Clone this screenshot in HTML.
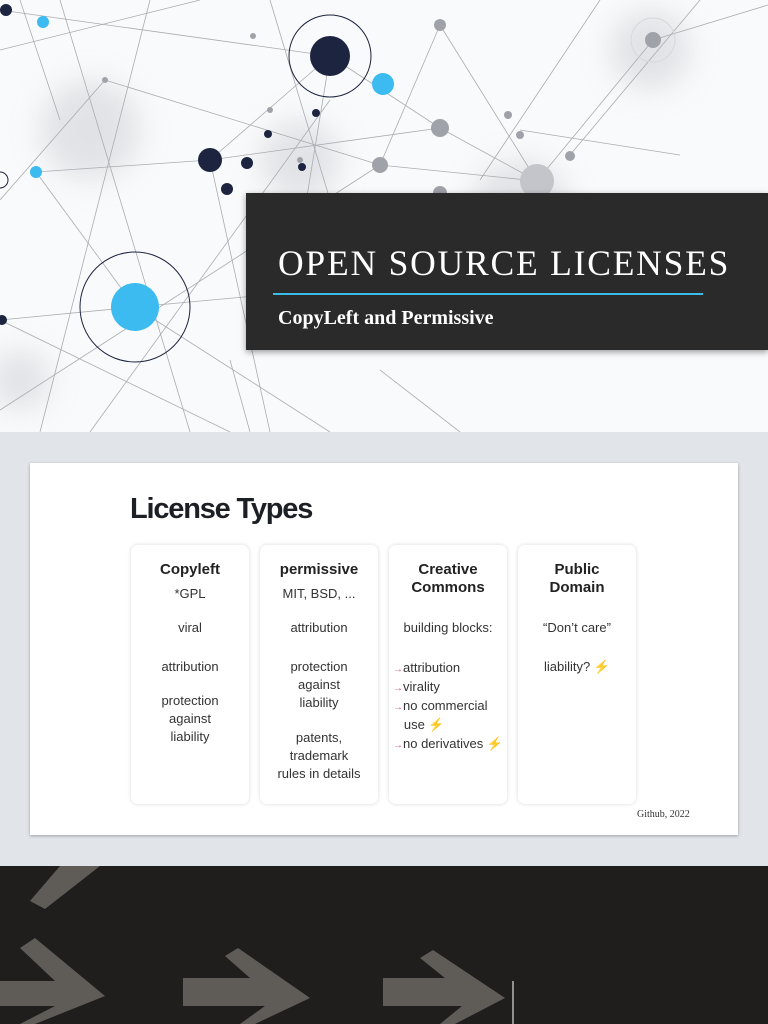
<!DOCTYPE html>
<html><head><meta charset="utf-8">
<style>
*{margin:0;padding:0;box-sizing:border-box}
body{width:768px;height:1024px;overflow:hidden;background:#e1e4e8;font-family:"Liberation Sans",sans-serif;position:relative}
#top{position:absolute;left:0;top:0;width:768px;height:432px;background:#f9fafb;overflow:hidden}
#tbox{position:absolute;left:246px;top:193px;width:522px;height:157px;background:#2a2a2a;box-shadow:0 2px 6px rgba(0,0,0,.4)}
#tbox h1{position:absolute;left:32px;top:49px;font-family:"Liberation Serif",serif;font-weight:normal;color:#fff;font-size:35.5px;letter-spacing:1.8px;white-space:nowrap}
#tbox .ln{position:absolute;left:27px;top:100px;width:430px;height:2px;background:#3bbbe8}
#tbox h2{position:absolute;left:32px;top:114px;font-family:"Liberation Serif",serif;font-weight:bold;color:#fff;font-size:20px}
#card{position:absolute;left:30px;top:463px;width:708px;height:372px;background:#fff;box-shadow:0 1px 3px rgba(0,0,0,.3)}
#card .t{position:absolute;left:100px;top:30px;font-size:29px;font-weight:bold;color:#1c1f24;letter-spacing:-1.2px}
.c{position:absolute;top:82px;width:118px;height:259px;background:#fff;border-radius:7px;box-shadow:0 0 4px rgba(0,0,0,.15);text-align:center;font-size:13px;color:#333;line-height:18px}
.c b{display:block;font-size:15px;color:#222;line-height:18px;margin-top:16px}
.c p{position:absolute;left:0;width:100%}
.l{text-align:left!important;left:4px!important;line-height:19px!important}
.l span{line-height:0}
.a{color:#e0509a;font-size:10px}
.z{color:#f4c430;line-height:0}
#cite{position:absolute;left:607px;top:346px;font-family:"Liberation Serif",serif;font-size:10px;color:#333}
#bot{position:absolute;left:0;top:866px;width:768px;height:158px;background:#1f1e1d;overflow:hidden}
</style></head><body>
<div id="top">
<svg width="768" height="432" style="position:absolute;left:0;top:0">
<defs><filter id="bl"><feGaussianBlur stdDeviation="14"/></filter></defs>
<g filter="url(#bl)" fill="#c9ccd2" opacity=".5">
<circle cx="90" cy="130" r="50"/><circle cx="300" cy="160" r="40"/><circle cx="650" cy="50" r="40"/><circle cx="20" cy="380" r="30"/><circle cx="520" cy="210" r="50"/>
</g>
<g stroke="#a9acb1" stroke-width=".8" fill="none">
<line x1="0" y1="10" x2="330" y2="56"/><line x1="36" y1="172" x2="210" y2="160"/><line x1="210" y1="160" x2="330" y2="56"/>
<line x1="210" y1="160" x2="440" y2="128"/><line x1="36" y1="172" x2="135" y2="307"/><line x1="0" y1="320" x2="135" y2="307"/>
<line x1="135" y1="307" x2="288" y2="293"/><line x1="105" y1="80" x2="0" y2="200"/><line x1="105" y1="80" x2="380" y2="165"/>
<line x1="330" y1="56" x2="440" y2="128"/><line x1="440" y1="128" x2="537" y2="181"/><line x1="537" y1="181" x2="653" y2="40"/>
<line x1="440" y1="25" x2="537" y2="181"/><line x1="440" y1="25" x2="380" y2="165"/><line x1="653" y1="40" x2="768" y2="5"/>
<line x1="520" y1="130" x2="680" y2="155"/><line x1="380" y1="165" x2="537" y2="181"/><line x1="0" y1="320" x2="230" y2="432"/>
<line x1="135" y1="307" x2="330" y2="432"/><line x1="60" y1="0" x2="190" y2="432"/><line x1="150" y1="0" x2="40" y2="432"/>
<line x1="270" y1="0" x2="330" y2="200"/><line x1="0" y1="50" x2="200" y2="0"/><line x1="600" y1="0" x2="480" y2="180"/>
<line x1="210" y1="160" x2="270" y2="432"/><line x1="0" y1="410" x2="380" y2="165"/><line x1="700" y1="0" x2="570" y2="155"/>
<line x1="90" y1="432" x2="330" y2="100"/><line x1="20" y1="0" x2="60" y2="120"/><line x1="330" y1="56" x2="290" y2="300"/>
<line x1="380" y1="370" x2="460" y2="432"/><line x1="230" y1="360" x2="250" y2="432"/>
</g>
<g fill="#9fa3a9">
<circle cx="440" cy="25" r="6"/><circle cx="440" cy="128" r="9"/><circle cx="380" cy="165" r="8"/><circle cx="537" cy="181" r="17" fill="#c3c5ca"/>
<circle cx="653" cy="40" r="8"/><circle cx="508" cy="115" r="4"/><circle cx="570" cy="156" r="5"/><circle cx="105" cy="80" r="3"/><circle cx="253" cy="36" r="3"/>
<circle cx="520" cy="135" r="4"/><circle cx="440" cy="193" r="7"/><circle cx="300" cy="160" r="3"/><circle cx="270" cy="110" r="3"/>
</g>
<circle cx="653" cy="40" r="22" fill="none" stroke="#d6d8db"/>
<g fill="#1c2440">
<circle cx="330" cy="56" r="20"/><circle cx="210" cy="160" r="12"/><circle cx="247" cy="163" r="6"/><circle cx="227" cy="189" r="6"/>
<circle cx="268" cy="134" r="4"/><circle cx="302" cy="167" r="4"/><circle cx="316" cy="113" r="4"/><circle cx="6" cy="10" r="6"/><circle cx="2" cy="320" r="5"/>
</g>
<circle cx="330" cy="56" r="41" fill="none" stroke="#1c2440" stroke-width="1"/>
<circle cx="135" cy="307" r="55" fill="none" stroke="#1c2440" stroke-width="1"/>
<circle cx="0" cy="180" r="8" fill="none" stroke="#1c2440" stroke-width="1"/>
<g fill="#3bbbf0">
<circle cx="135" cy="307" r="24"/><circle cx="383" cy="84" r="11"/><circle cx="43" cy="22" r="6"/><circle cx="36" cy="172" r="6"/>
</g>
</svg>
<div id="tbox"><h1>OPEN SOURCE LICENSES</h1><div class="ln"></div><h2>CopyLeft and Permissive</h2></div>
</div>
<div id="card">
<div class="t">License Types</div>
<div class="c" style="left:101px"><b>Copyleft</b><p style="top:40px">*GPL</p><p style="top:74px">viral</p><p style="top:113px">attribution</p><p style="top:147px">protection<br>against<br>liability</p></div>
<div class="c" style="left:230px"><b>permissive</b><p style="top:40px">MIT, BSD, ...</p><p style="top:74px">attribution</p><p style="top:113px">protection<br>against<br>liability</p><p style="top:184px">patents,<br>trademark<br>rules in details</p></div>
<div class="c" style="left:359px"><b>Creative<br>Commons</b><p style="top:74px">building blocks:</p><p class="l" style="top:113px"><span class="a">→</span>attribution<br><span class="a">→</span>virality<br><span class="a">→</span>no commercial<br>&nbsp;&nbsp;&nbsp;use <span class="z">⚡</span><br><span class="a">→</span>no derivatives <span class="z">⚡</span></p></div>
<div class="c" style="left:488px"><b>Public<br>Domain</b><p style="top:74px">“Don’t care”</p><p style="top:113px">liability? <span class="z">⚡</span></p></div>
<div id="cite">Github, 2022</div>
</div>
<div id="bot">
<svg width="768" height="158" style="position:absolute;left:0;top:0">
<g fill="#75716c" opacity=".75">
<polygon points="30,0 55,0 100,0 45,43 30,35 60,0"/>
<polygon points="0,115 55,115 20,82 35,72 105,130 35,158 20,158 55,140 0,140"/>
<polygon points="183,112 250,112 225,90 238,82 310,132 255,158 240,158 265,140 183,140"/>
<polygon points="383,112 445,112 420,92 433,84 505,132 455,158 440,158 462,140 383,140"/>
</g>
<line x1="513" y1="115" x2="513" y2="158" stroke="#ddd" stroke-width="1.2"/>
</svg>
</div>
</body></html>
